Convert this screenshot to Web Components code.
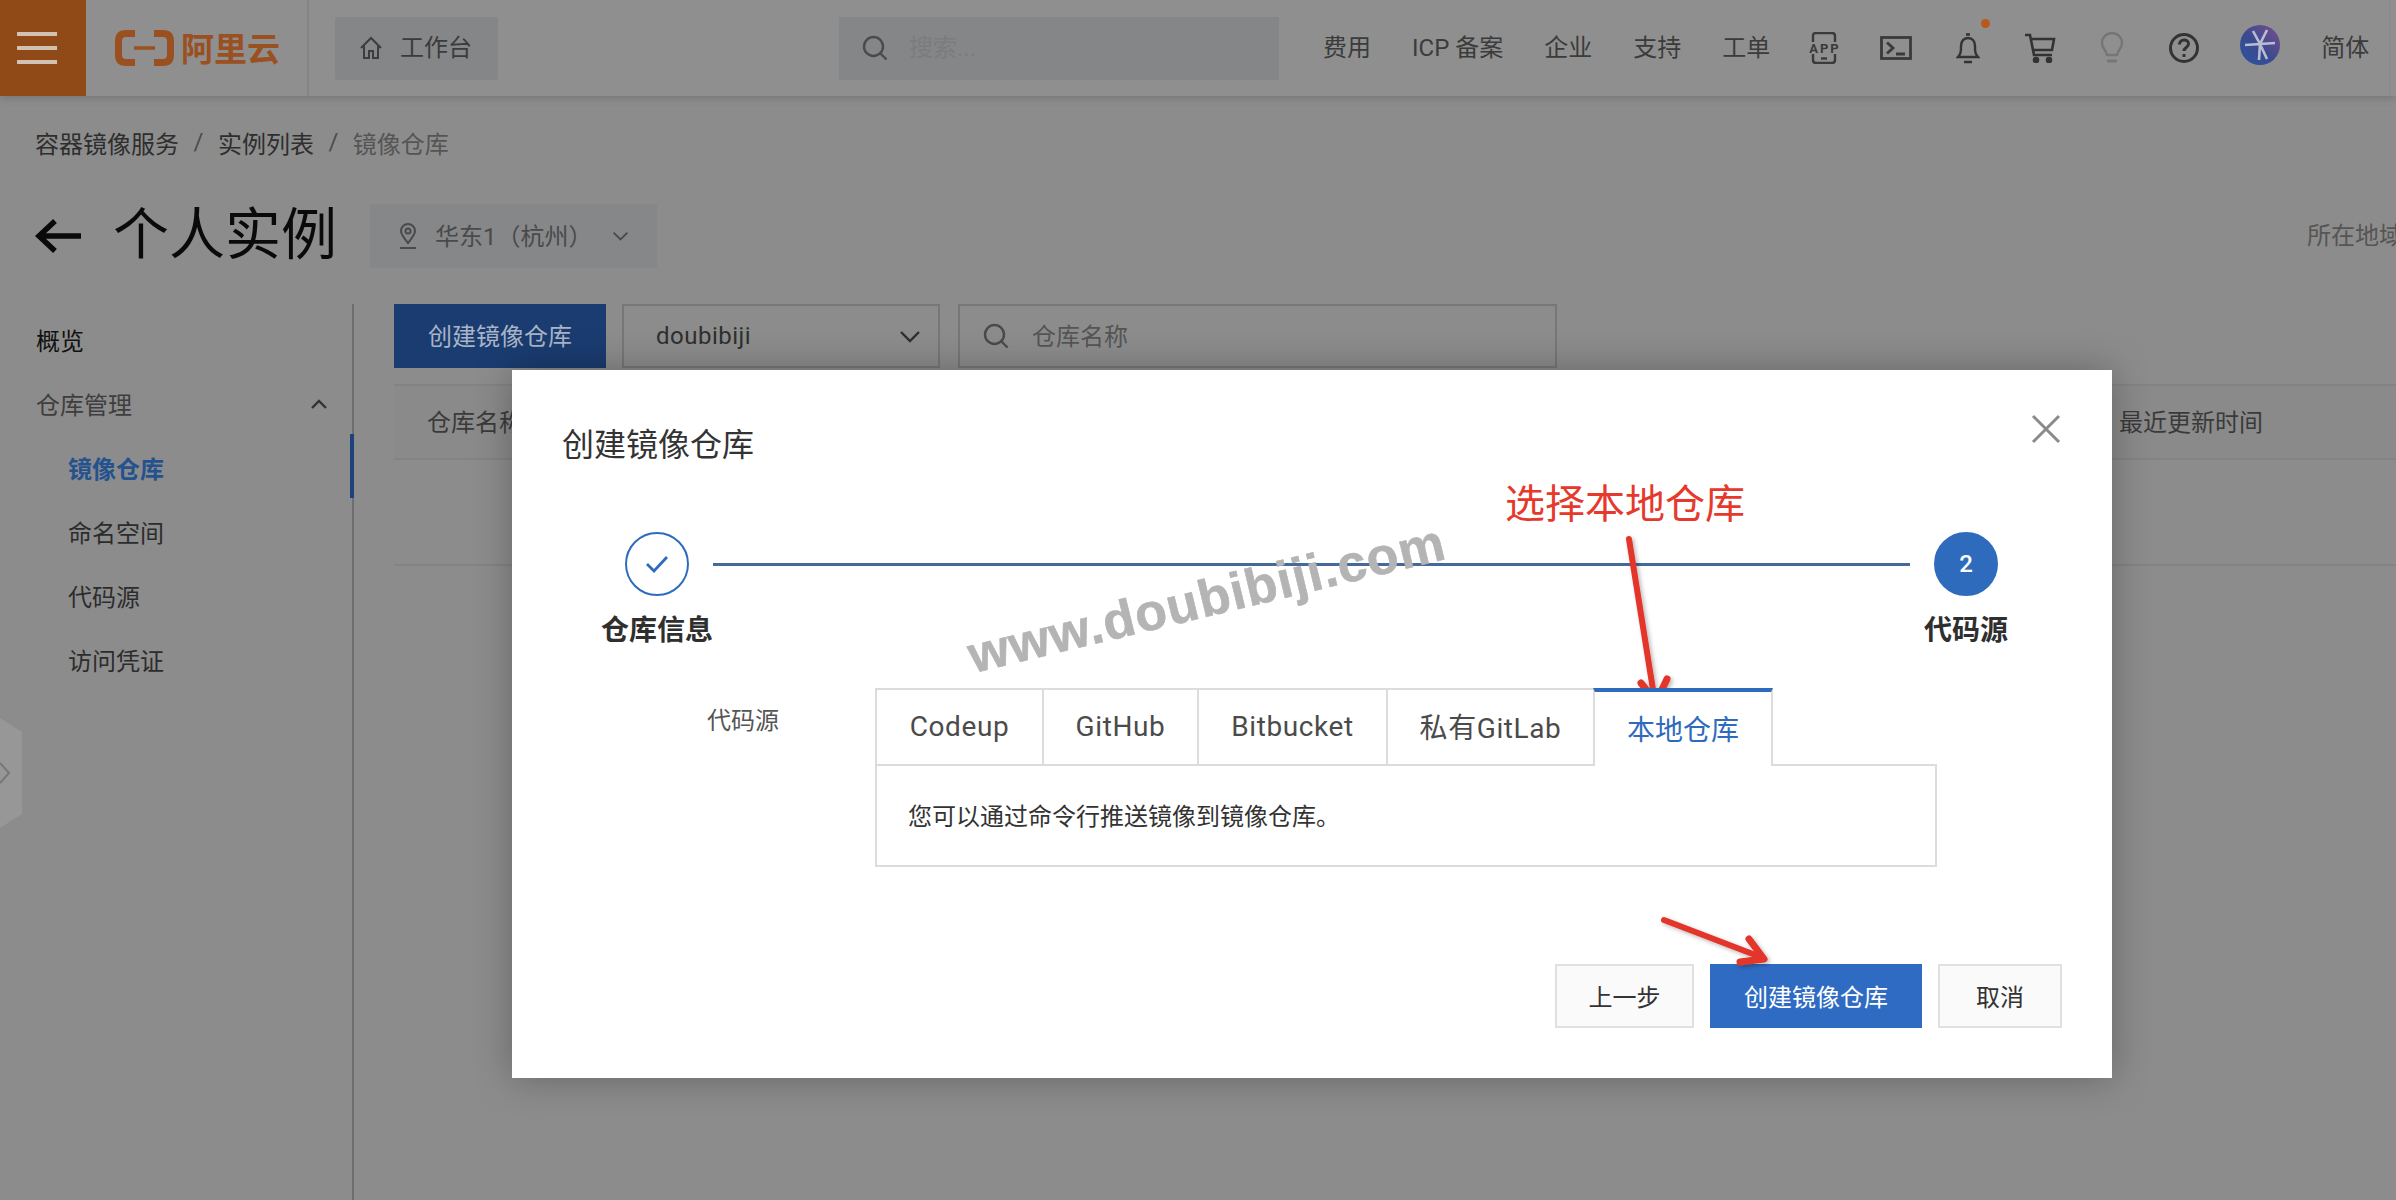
<!DOCTYPE html>
<html lang="zh-CN">
<head>
<meta charset="utf-8">
<title>个人实例</title>
<style>
html,body{margin:0;height:100%}
body{width:2396px;height:1200px;overflow:hidden;position:relative;background:#8c8c8c;color:#2e2e2e;font:24px Roboto,"Noto Sans CJK SC",sans-serif}
.page{display:flex;flex-direction:column;height:1200px}
</style>
</head>
<body>
<div class="page">
  <cr-topbar></cr-topbar>
  <cr-crumbs></cr-crumbs>
  <cr-titlebar></cr-titlebar>
  <cr-workspace>
    <cr-sidebar slot="side"></cr-sidebar>
    <cr-toolbar></cr-toolbar>
    <cr-table-head></cr-table-head>
  </cr-workspace>
</div>
<cr-handle></cr-handle>
<cr-dialog heading="创建镜像仓库">
  <cr-steps></cr-steps>
  <cr-tabs></cr-tabs>
  <cr-btn slot="footer">上一步</cr-btn>
  <cr-btn slot="footer" primary>创建镜像仓库</cr-btn>
  <cr-btn slot="footer" style="width:124px">取消</cr-btn>
</cr-dialog>
<cr-marks></cr-marks>

<script>
/* small helper: every element is just a shadow root with its own style + markup */
function define(tag, css, html) {
  customElements.define(tag, class extends HTMLElement {
    connectedCallback() {
      if (this.shadowRoot) return;
      var root = this.attachShadow({ mode: 'open' });
      root.innerHTML = '<style>' + css + '</style>' + (typeof html === 'function' ? html(this) : html);
    }
  });
}

var ICONS = {
  home: '<svg width="24" height="24" viewBox="0 0 24 24" fill="none" stroke="#3d3d3d" stroke-width="2"><path d="M2 12 12 2l10 10M5 10v12h5v-7h4v7h5V10"/></svg>',
  search: '<svg width="28" height="28" viewBox="0 0 28 28" fill="none" stroke="currentColor" stroke-width="2.4"><circle cx="12.500" cy="12.500" r="9.500"/><path d="m19.500 19.500 6 6"/></svg>',
  chevron: '<svg width="22" height="13" viewBox="0 0 22 13" fill="none" stroke="currentColor" stroke-width="2.400"><path d="m2 2 9 9 9-9"/></svg>'
};

define('cr-topbar', `
  :host{display:flex;align-items:center;flex:none;height:96px;background:#8f8f8f;box-shadow:0 2px 8px rgba(0,0,0,.16);color:#3b3b3b;position:relative;z-index:1}
  .burger{width:86px;height:96px;background:#8f4a17;display:flex;flex-direction:column;justify-content:center;gap:10px;align-items:center;flex:none}
  .burger i{display:block;width:40px;height:4px;background:#d2c2b4;margin-left:-12px}
  .logo{width:192px;padding-left:29px;height:96px;border-right:2px solid #858585;display:flex;align-items:center;gap:7px;color:#9a5020;font-weight:700;font-size:33px;flex:none}
  .logo span{padding-bottom:2px}
  .desk{margin-left:26px;width:163px;height:63px;background:#858688;border-radius:2px;display:flex;align-items:center;gap:17px;padding-left:24px;box-sizing:border-box;flex:none}
  .search{margin-left:341px;width:440px;height:63px;background:#858688;display:flex;align-items:center;gap:20px;padding-left:22px;box-sizing:border-box;color:#4b4b4b;flex:none}
  .search span{color:#7c7c7c}
  .desk span,.search span,nav span,.lang{position:relative;top:-3px}
  nav{margin-left:44px;display:flex;gap:41px;white-space:nowrap}
  .icons{display:flex;margin-left:18px}
  .icons div{width:72px;height:96px;display:flex;align-items:center;justify-content:center;position:relative}
  .dot{position:absolute;left:49px;top:19px;width:9px;height:9px;border-radius:50%;background:#b8591b}
  .avatar{margin-left:20px;display:block;flex:none;margin-top:-6px}
  .lang{margin-left:41px}
  .edge{position:absolute;right:6px;top:0;bottom:0;width:1px;background:#888}
`, `
  <div class="burger"><i></i><i></i><i></i></div>
  <div class="logo">
    <svg width="59" height="36" viewBox="0 0 59 36" fill="none" stroke="#9a5020"><path d="M20 3.500H11Q3.500 3.500 3.500 11V25Q3.500 32.500 11 32.500H20M39 3.500H48Q55.500 3.500 55.500 11V25Q55.500 32.500 48 32.500H39" stroke-width="7"/><path d="M19 18H40" stroke-width="3.500"/></svg>
    <span>阿里云</span>
  </div>
  <div class="desk">${ICONS.home}<span>工作台</span></div>
  <div class="search">${ICONS.search}<span>搜索...</span></div>
  <nav><span>费用</span><span>ICP 备案</span><span>企业</span><span>支持</span><span>工单</span></nav>
  <div class="icons">
    <div><svg width="32" height="32" viewBox="0 0 32 32" fill="none" stroke="#3a3a3a" stroke-width="2.400"><path d="M5 10V4q0-3 3-3h16q3 0 3 3v6M5 22v6q0 3 3 3h16q3 0 3-3v-6"/><path d="M13 26.500h6"/><text x="17" y="20.500" text-anchor="middle" font-family="Roboto" font-weight="700" font-size="13" letter-spacing="2" fill="#3a3a3a" stroke="none">APP</text></svg></div>
    <div><svg width="32" height="24" viewBox="0 0 32 24" fill="none" stroke="#3a3a3a" stroke-width="2.800"><rect x="1.500" y="1.500" width="29" height="21"/><path d="m7 6.500 6 5.500-6 5.500M16 18h9"/></svg></div>
    <div><svg width="24" height="32" viewBox="0 0 24 32" fill="none" stroke="#333" stroke-width="2.400"><path d="M2 25c3-3 3-6 3-11 0-5 3-8 7-8s7 3 7 8c0 5 0 8 3 11zM10 2.500h4M8 30h8"/></svg><span class="dot"></span></div>
    <div><svg width="32" height="30" viewBox="0 0 32 30" fill="none" stroke="#333" stroke-width="2.600"><path d="M1 2h5l4 20h18M7 6h23l-2 11H9"/><circle cx="12" cy="27" r="2" fill="#333"/><circle cx="25" cy="27" r="2" fill="#333"/></svg></div>
    <div><svg width="24" height="32" viewBox="0 0 24 32" fill="none" stroke="#767676" stroke-width="2.400"><path d="M7 23c0-4-5-6-5-12a10 10 0 0 1 20 0c0 6-5 8-5 12z"/><path d="M7 29h10" stroke-width="3"/></svg></div>
    <div><svg width="32" height="32" viewBox="0 0 32 32" fill="none" stroke="#333" stroke-width="3"><circle cx="16" cy="16" r="13.500"/><path d="M11.500 12.500c0-6 9-6 9-.500 0 3.500-4.500 3.500-4.500 7"/><path d="M16 22v3"/></svg></div>
  </div>
  <svg class="avatar" width="40" height="40" viewBox="0 0 40 40"><defs><linearGradient id="av" x1="1" y1="0" x2="0" y2="1"><stop offset="0" stop-color="#7a4f8c"/><stop offset=".55" stop-color="#3a4a8f"/><stop offset="1" stop-color="#2a55a0"/></linearGradient></defs><circle cx="20" cy="20" r="20" fill="url(#av)"/><path d="M5 20 35 18M27 5 20 19 27 34M13 6 20 19 19 35" fill="none" stroke="#b8bed2" stroke-width="2.600"/></svg>
  <span class="lang">简体</span>
  <span class="edge"></span>
`);

define('cr-crumbs', `
  :host{display:flex;align-items:center;gap:14.500px;flex:none;height:64px;margin-top:14px;margin-bottom:2px;padding-left:35px;color:#2e2e2e}
  i{font-style:normal;color:#4c4c4c}
  .now{color:#555}
`, '<span>容器镜像服务</span><i>/</i><span>实例列表</span><i>/</i><span class="now">镜像仓库</span>');

define('cr-titlebar', `
  :host{display:flex;align-items:center;flex:none;height:64px;margin-top:28px;padding-left:35px;position:relative;color:#0a0a0a}
  h1{margin:-3px 0 0 32px;font-size:56px;font-weight:400;line-height:64px}
  .region{margin-left:33px;width:287px;height:64px;background:#868789;display:flex;align-items:center;box-sizing:border-box;padding-left:28px;color:#4a4a4a}
  .region span{margin-left:17px;width:177px;white-space:nowrap;position:relative;top:-2px}
  .right{position:absolute;left:2307px;top:12px;white-space:nowrap;color:#555}
`, `
  <svg width="46" height="36" viewBox="0 0 46 36" fill="none" stroke="#0a0a0a" stroke-width="5.500"><path d="M46 18H5M20 3 4 18l16 15"/></svg>
  <h1>个人实例</h1>
  <div class="region">
    <svg width="20" height="28" viewBox="0 0 20 28" fill="none" stroke="#4a4a4a" stroke-width="2"><path d="M10 21C5 15 3 12 3 9a7 7 0 0 1 14 0c0 3-2 6-7 12z"/><circle cx="10" cy="9" r="2.500"/><path d="M2 26h16"/></svg>
    <span>华东1（杭州）</span>${ICONS.chevron.replace('width="22" height="13"', 'width="17" height="10"')}
  </div>
  <span class="right">所在地域</span>
`);

define('cr-workspace', `
  :host{display:flex;flex:1;margin-top:36px;min-height:0}
  .body{flex:1;min-width:0;padding-left:40px}
`, '<slot name="side"></slot><div class="body"><slot></slot></div>');

define('cr-sidebar', `
  :host{display:block;flex:none;width:354px;box-sizing:border-box;border-right:2px solid #6e6e6e;padding-top:3px;position:relative;color:#2c2c2c}
  div{height:64px;display:flex;align-items:center;padding-left:36px;position:relative}
  .sub{padding-left:68px}
  .open{color:#3e3e3e}
  .open svg{position:absolute;left:310px;top:28px}
  .on{color:#24528f;font-weight:700}
  .on::after{content:"";position:absolute;right:-2px;top:-1px;width:4px;height:64px;background:#1d427c}
`, `
  <div style="color:#111">概览</div>
  <div class="open">仓库管理<svg width="18" height="11" viewBox="0 0 18 11" fill="none" stroke="#333" stroke-width="2.400"><path d="m2 9 7-7 7 7"/></svg></div>
  <div class="sub on">镜像仓库</div>
  <div class="sub">命名空间</div>
  <div class="sub">代码源</div>
  <div class="sub">访问凭证</div>
`);

define('cr-toolbar', `
  :host{display:flex;height:64px;color:#4a4a4a}
  .create{width:212px;background:#1a3c70;color:#a9b4c6;display:flex;align-items:center;justify-content:center;padding-bottom:3px;box-sizing:border-box}
  .select,.find{border:2px solid #777;box-sizing:border-box;height:64px;display:flex;align-items:center}
  .select{margin-left:16px;width:318px;padding:0 17px 0 32px;justify-content:space-between;color:#2f2f2f;letter-spacing:.5px}
  .find{margin-left:18px;width:599px;padding-left:22px;gap:22px;color:#4a4a4a}
  .find span{color:#555;position:relative;top:-2px}
`, `
  <div class="create">创建镜像仓库</div>
  <div class="select"><span>doubibiji</span>${ICONS.chevron}</div>
  <div class="find">${ICONS.search}<span>仓库名称</span></div>
`);

define('cr-table-head', `
  :host{display:block;margin-top:16px;color:#3a3a3a}
  .row{display:flex;height:76px;align-items:center;background:#8a8a8a;border-top:2px solid #838383;border-bottom:2px solid #838383;box-sizing:border-box;padding-bottom:3px}
  .a{width:1725px;padding-left:33px;box-sizing:border-box}
  .empty{height:104px;border-bottom:2px solid #838383}
`, '<div class="row"><span class="a">仓库名称</span><span>最近更新时间</span></div><div class="empty"></div>');

define('cr-handle', `
  :host{position:absolute;left:0;top:718px;width:22px;height:110px;background:#979797;clip-path:polygon(0 0,100% 14px,100% 96px,0 100%);display:flex;align-items:center}
`, '<svg width="11" height="24" viewBox="0 0 11 24" fill="none" stroke="#777" stroke-width="2"><path d="m0 2 9 10-9 10"/></svg>');

define('cr-dialog', `
  :host{position:absolute;left:512px;top:370px;width:1600px;height:708px;background:#fff;box-shadow:0 0 36px rgba(0,0,0,.28);display:flex;flex-direction:column;color:#333}
  h2{margin:55px 0 0 50px;font-size:32px;line-height:40px;font-weight:400}
  .close{position:absolute;right:51px;top:44px}
  footer{display:flex;justify-content:flex-end;gap:16px;padding-right:50px;margin-top:97px}
`, function (el) {
  return '<h2>' + el.getAttribute('heading') + '</h2>' +
    '<svg class="close" width="30" height="30" viewBox="0 0 30 30" fill="none" stroke="#8a8a8a" stroke-width="3"><path d="m2 2 26 26M28 2 2 28"/></svg>' +
    '<slot></slot><footer><slot name="footer"></slot></footer>';
});

define('cr-steps', `
  :host{display:grid;grid-template-columns:112px 1fr 112px;margin:67px 0 0 89px;width:1421px}
  .step{display:flex;flex-direction:column;align-items:center;font-weight:700;font-size:28px;color:#2f2f2f;white-space:nowrap}
  .step b{width:64px;height:64px;border-radius:50%;border:2px solid #2f6bbd;box-sizing:border-box;display:flex;align-items:center;justify-content:center;margin-bottom:15px;font:500 24px Roboto,sans-serif;color:#fff}
  .step b.fill{background:#2f6bbd}
  .step span{line-height:40px}
  .line{height:3px;background:#45699a;margin-top:31px}
`, `
  <div class="step"><b><svg width="24" height="18" viewBox="0 0 24 18" fill="none" stroke="#2f6bbd" stroke-width="2.800"><path d="m2 9 7 7L22 2"/></svg></b><span>仓库信息</span></div>
  <div class="line"></div>
  <div class="step"><b class="fill">2</b><span>代码源</span></div>
`);

define('cr-tabs', `
  :host{display:grid;grid-template-columns:267px 1062px;column-gap:96px;margin-top:37px}
  label{text-align:right;padding-top:17px;line-height:32px;color:#555}
  .tabs{display:flex;height:76px;box-sizing:border-box;font-size:28px;color:#4b4b4b;letter-spacing:.6px}
  .tabs div{display:flex;align-items:center;justify-content:center;box-sizing:border-box;height:78px;padding-bottom:2px;border:solid #dcdcdc;border-width:2px 2px 2px 0;white-space:nowrap}
  .tabs div:first-child{border-left-width:2px}
  .tabs .on{color:#2f6bbd;letter-spacing:0;border-top:4px solid #2f6bbd;border-bottom:none;background:#fff;position:relative;z-index:1;margin-left:-2px;border-left:2px solid #dcdcdc}
  .pane{height:103px;box-sizing:border-box;border:2px solid #dcdcdc;padding:0 31px 3px;display:flex;align-items:center;color:#333}
`, `
  <label>代码源</label>
  <div>
    <div class="tabs">
      <div style="width:169px">Codeup</div><div style="width:155px">GitHub</div><div style="width:189px">Bitbucket</div><div style="width:207px">私有GitLab</div><div class="on" style="width:180px">本地仓库</div>
    </div>
    <div class="pane">您可以通过命令行推送镜像到镜像仓库。</div>
  </div>
`);

define('cr-btn', `
  :host{display:flex;align-items:center;justify-content:center;width:139px;height:64px;box-sizing:border-box;border:2px solid #e0e0e0;background:#fafafa;color:#333;padding-bottom:2px}
  :host([primary]){width:212px;background:#2f6bc2;border-color:#2f6bc2;color:#fff}
`, '<slot></slot>');

/* hand-drawn notes on top of the screenshot: watermark, red label and arrows */
define('cr-marks', `
  :host{position:absolute;left:0;top:0;width:2396px;height:1200px;pointer-events:none}
  .wm{position:absolute;left:976px;top:625px;font:700 52px "Liberation Sans",sans-serif;letter-spacing:1px;color:#b4b4b4;-webkit-text-stroke:.6px #b4b4b4;transform:rotate(-13.600deg);transform-origin:0 100%;white-space:nowrap;line-height:60px;height:60px}
  .note{position:absolute;left:1505px;top:480px;font-size:40px;line-height:50px;color:#e6392c;white-space:nowrap}
  svg{position:absolute;left:0;top:0}
`, `
  <span class="wm">www.doubibiji.com</span>
  <span class="note">选择本地仓库</span>
  <svg width="2396" height="1200" viewBox="0 0 2396 1200" fill="none" stroke="#e3342a" stroke-linecap="round" stroke-linejoin="round">
    <defs><filter id="sh" x="-30%" y="-30%" width="160%" height="160%"><feDropShadow dx="2" dy="2" stdDeviation="2" flood-color="#000" flood-opacity=".28"/></filter></defs>
    <g filter="url(#sh)">
      <path d="M1629 539 1654 696" stroke-width="6"/>
      <path d="M1641 683 1656 702 1667 679" stroke-width="7"/>
      <path d="M1664 920 1758 956" stroke-width="6"/>
      <path d="M1749 939 1764 959 1740 962" stroke-width="7"/>
    </g>
  </svg>
`);
</script>
</body>
</html>
